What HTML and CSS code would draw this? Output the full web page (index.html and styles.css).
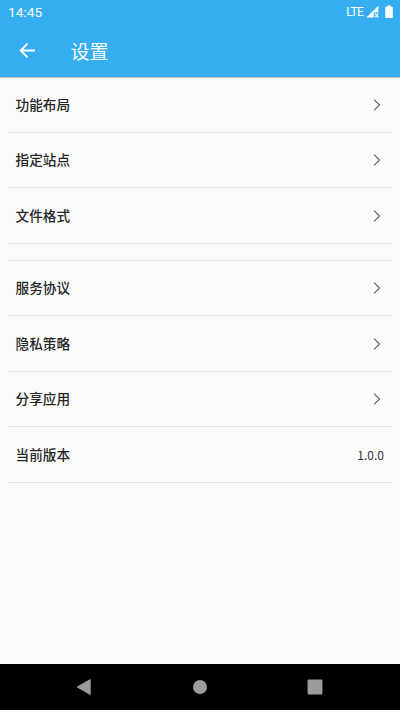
FILE: index.html
```html
<!DOCTYPE html>
<html lang="zh-CN">
<head>
<meta charset="utf-8">
<title>设置</title>
<link rel="stylesheet" href="styles.css">
</head>
<body>
<div class="screen">
  <header class="header">
    <div class="status">
      <span class="time">14:45</span>
      <span class="network">LTE</span>
      <svg class="signal" width="14" height="14" viewBox="0 0 14 14"><path d="M.4 12.6 12.4.8V7.4H7.8v5.2z" fill="#fff"/><path d="m8.8 8.6 3.6 3.8m0-3.8-3.6 3.8" stroke="#fff" stroke-width="1.2"/></svg>
      <svg class="battery" width="8" height="14" viewBox="0 0 8 14"><path d="M2.3 .5h3.4v1.3H7q.8 0 .8.8v9.6q0 .8-.8.8H1q-.8 0-.8-.8V2.6q0-.8.8-.8h1.3z" fill="#fff"/></svg>
    </div>
    <div class="toolbar">
      <svg class="back" width="18" height="18" viewBox="0 0 18 18"><path d="M17 8.5H3M9.5 1.7 2.7 8.5l6.8 6.8" fill="none" stroke="#fff" stroke-width="1.8"/></svg>
      <h1 class="title">设置</h1>
    </div>
  </header>
  <main class="content">
    <section class="group">
      <div class="row"><span class="label">功能布局</span><svg class="chevron" viewBox="0 0 8 12"><path d="M1 .6 6.6 6 1 11.4"/></svg></div>
      <div class="row"><span class="label">指定站点</span><svg class="chevron" viewBox="0 0 8 12"><path d="M1 .6 6.6 6 1 11.4"/></svg></div>
      <div class="row"><span class="label">文件格式</span><svg class="chevron" viewBox="0 0 8 12"><path d="M1 .6 6.6 6 1 11.4"/></svg></div>
    </section>
    <section class="group group-separated">
      <div class="row"><span class="label">服务协议</span><svg class="chevron" viewBox="0 0 8 12"><path d="M1 .6 6.6 6 1 11.4"/></svg></div>
      <div class="row"><span class="label">隐私策略</span><svg class="chevron" viewBox="0 0 8 12"><path d="M1 .6 6.6 6 1 11.4"/></svg></div>
      <div class="row"><span class="label">分享应用</span><svg class="chevron" viewBox="0 0 8 12"><path d="M1 .6 6.6 6 1 11.4"/></svg></div>
      <div class="row"><span class="label">当前版本</span><span class="value">1.0.0</span></div>
    </section>
  </main>
  <nav class="navbar">
    <svg width="16" height="18" viewBox="0 0 16 18"><path d="M14.2 1.6v14.8L1.2 9z" fill="#9c9c9c" stroke="#9c9c9c" stroke-linejoin="round"/></svg>
    <svg width="16" height="18" viewBox="0 0 16 18"><circle cx="8" cy="9" r="7" fill="#9c9c9c"/></svg>
    <svg width="16" height="18" viewBox="0 0 16 18"><rect x=".6" y="1.6" width="14.8" height="14.8" rx="1" fill="#9c9c9c"/></svg>
  </nav>
</div>
</body>
</html>
```
FILE: styles.css
```css
* {
  box-sizing: border-box;
}

body {
  margin: 0;
  font-family: Roboto, "Noto Sans CJK SC", sans-serif;
}

.screen {
  display: flex;
  flex-direction: column;
  width: 400px;
  height: 710px;
  overflow: hidden;
  background: #fbfbfb;
}

.header {
  height: 77.3px;
  background: #34adf1;
  color: #fff;
  box-shadow: 0 1px 1px rgba(0, 0, 0, 0.2);
}

.status {
  display: flex;
  align-items: center;
  height: 24px;
  padding: 0 7.5px 0 8px;
}

.time {
  flex: 1;
  font-size: 13.7px;
}

.network {
  font-size: 12px;
  letter-spacing: -0.7px;
}

.signal {
  margin-left: 2.5px;
}

.battery {
  margin-left: 5px;
}

.toolbar {
  display: flex;
  align-items: center;
  height: 53px;
  padding-left: 18px;
}

.title {
  margin: 0 0 1px 34.5px;
  font-size: 19px;
  font-weight: 400;
}

.content {
  flex: 1;
  padding: 0 8px;
}

.group-separated {
  margin-top: 16px;
  border-top: 1px solid #e6e6e6;
}

.row {
  display: flex;
  align-items: center;
  justify-content: space-between;
  height: 55.5px;
  padding: 0 8px 0 7.5px;
  border-bottom: 1px solid #e6e6e6;
}

.label {
  padding-bottom: 1.5px;
  color: #262626;
  font-size: 13.65px;
  font-weight: 500;
}

.chevron {
  width: 8px;
  height: 12px;
  margin-right: 3.5px;
  fill: none;
  stroke: #606060;
  stroke-width: 1.1;
}

.value {
  color: #333;
  font-family: "Noto Sans CJK SC", sans-serif;
  font-size: 12px;
}

.navbar {
  display: flex;
  align-items: center;
  justify-content: space-between;
  height: 46.5px;
  padding: 0 77px 0 76px;
  background: #000;
}
```
